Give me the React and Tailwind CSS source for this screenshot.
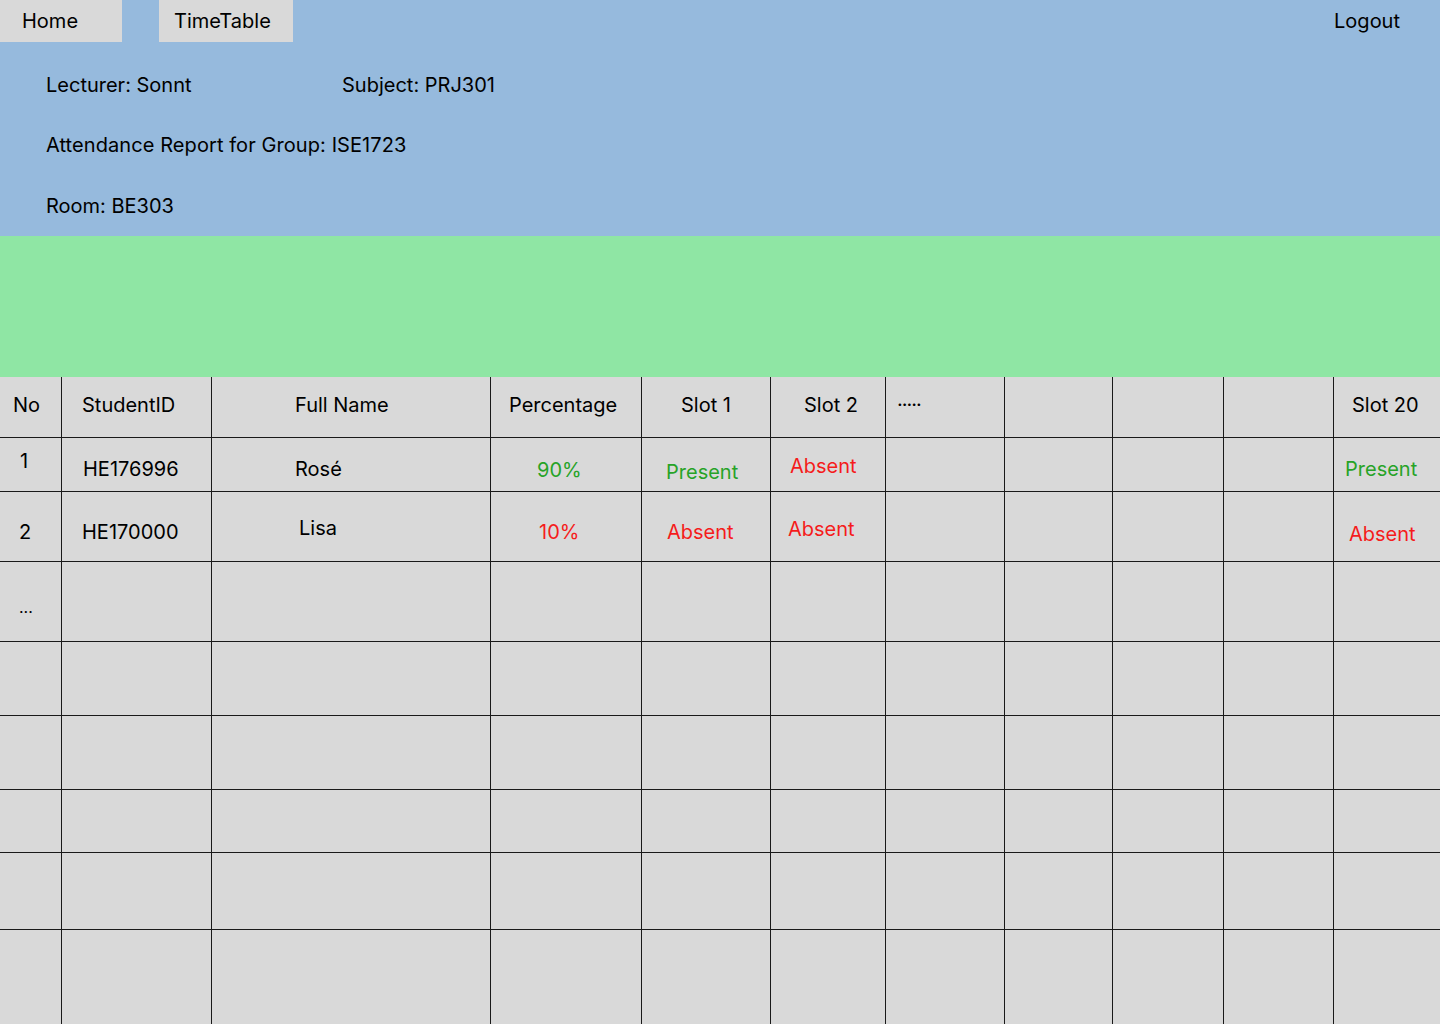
const font = { fontFamily: 'Inter, "Noto Sans", sans-serif' };

const cols = 'grid grid-cols-[61px_150px_279px_151px_129px_115px_119px_108px_111px_110px_107px]';

const green = 'text-[#27a327]';
const red = 'text-[#f51c1c]';

// each cell: [text, padding classes, colour]
const rows = [
  {
    h: 'h-[60px]',
    cells: [
      ['No', 'pl-[13px] pt-[16px]'],
      ['StudentID', 'pl-[20px] pt-[16px]'],
      ['Full Name', 'pl-[83px] pt-[16px]'],
      ['Percentage', 'pl-[18px] pt-[16px]'],
      ['Slot 1', 'pl-[39px] pt-[16px]'],
      ['Slot 2', 'pl-[33px] pt-[16px]'],
      ['.....', 'pl-[11px] pt-[10px] tracking-[-1px]'],
      ['', ''],
      ['', ''],
      ['', ''],
      ['Slot 20', 'pl-[18px] pt-[16px]'],
    ],
  },
  {
    h: 'h-[54px]',
    cells: [
      ['1', 'pl-[20px] pt-[11px]'],
      ['HE176996', 'pl-[21px] pt-[19px]'],
      ['Rosé', 'pl-[83px] pt-[19px]'],
      ['90%', 'pl-[46px] pt-[20px]', green],
      ['Present', 'pl-[24px] pt-[22px]', green],
      ['Absent', 'pl-[19px] pt-[16px]', red],
      ['', ''],
      ['', ''],
      ['', ''],
      ['', ''],
      ['Present', 'pl-[11px] pt-[19px]', green],
    ],
  },
  {
    h: 'h-[70px]',
    cells: [
      ['2', 'pl-[19px] pt-[28px]'],
      ['HE170000', 'pl-[20px] pt-[28px]'],
      ['Lisa', 'pl-[87px] pt-[24px]'],
      ['10%', 'pl-[48px] pt-[28px]', red],
      ['Absent', 'pl-[25px] pt-[28px]', red],
      ['Absent', 'pl-[17px] pt-[25px]', red],
      ['', ''],
      ['', ''],
      ['', ''],
      ['', ''],
      ['Absent', 'pl-[15px] pt-[30px]', red],
    ],
  },
  { h: 'h-[80px]', cells: [['...', 'pl-[19px] pt-[33px] text-[16px]']] },
  { h: 'h-[74px]', cells: [] },
  { h: 'h-[74px]', cells: [] },
  { h: 'h-[63px]', cells: [] },
  { h: 'h-[77px]', cells: [] },
  { h: 'h-[95px]', cells: [] },
];

const Row = ({ row, first }) => {
  const cells = Array.from({ length: 11 }, (_, i) => row.cells[i] || ['', '']);
  return (
    <div className={`${cols} ${row.h} ${first ? '' : 'border-t border-[#1a1a1a]'}`}>
      {cells.map(([text, pad, color], i) => (
        <div
          key={i}
          className={`${i === 0 ? '' : 'border-l border-[#1a1a1a]'} ${pad} ${color || 'text-black'} leading-[24px] whitespace-nowrap`}
        >
          {text}
        </div>
      ))}
    </div>
  );
};

export default function App() {
  return (
    <div className="w-[1440px] h-[1024px] overflow-hidden text-[20px] text-black" style={font}>
      <header className="bg-[#96badd] h-[236px] flex flex-col">
        <div className="flex items-start">
          <button className="w-[122px] h-[42px] bg-[#d9d9d9] text-left pl-[22px] leading-[42px]">Home</button>
          <button className="ml-[37px] w-[134px] h-[42px] bg-[#d9d9d9] text-left pl-[15px] leading-[42px]">TimeTable</button>
          <button className="ml-auto mr-[40px] h-[42px] leading-[42px]">Logout</button>
        </div>
        <div className="pl-[46px] pt-[31px] flex flex-col gap-[36px] leading-[24px]">
          <div className="flex">
            <span className="w-[296px]">Lecturer: Sonnt</span>
            <span>Subject: PRJ301</span>
          </div>
          <div className="tracking-[0.08px]">Attendance Report for Group: ISE1723</div>
          <div className="mt-[1px]">Room: BE303</div>
        </div>
      </header>
      <div className="bg-[#8fe6a4] h-[141px]" />
      <div className="bg-[#d9d9d9]">
        {rows.map((row, i) => (
          <Row key={i} row={row} first={i === 0} />
        ))}
      </div>
    </div>
  );
}
